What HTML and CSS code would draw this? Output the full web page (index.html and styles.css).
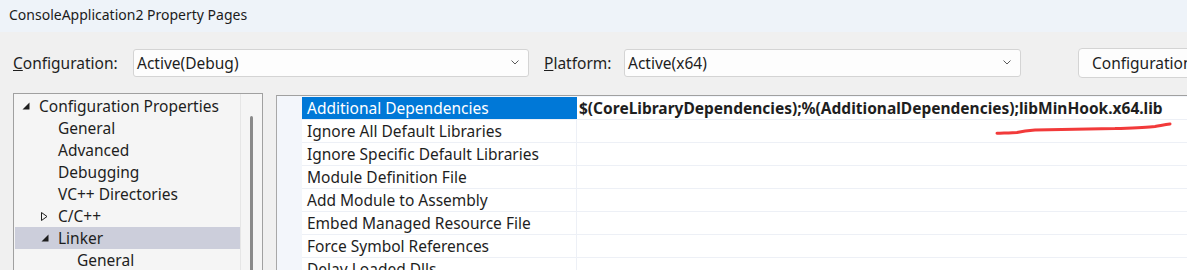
FILE: index.html
```html
<!DOCTYPE html>
<html lang="en">
<head>
    <meta charset="UTF-8">
    <title>ConsoleApplication2 Property Pages</title>
    <link rel="stylesheet" href="styles.css">
</head>
<body>
<div class="titlebar">ConsoleApplication2 Property Pages</div>

<div class="toolbar">
    <label class="field-label cfg-label"><u>C</u>onfiguration:</label>
    <div class="combo cfg-combo">
        <span>Active(Debug)</span>
        <svg class="chevron" width="8" height="5" viewBox="0 0 8 5"><path d="M0.5 0.5 L4 4 L7.5 0.5" fill="none" stroke="#5a5a5a" stroke-width="1"/></svg>
    </div>
    <label class="field-label plat-label"><u>P</u>latform:</label>
    <div class="combo plat-combo">
        <span>Active(x64)</span>
        <svg class="chevron" width="8" height="5" viewBox="0 0 8 5"><path d="M0.5 0.5 L4 4 L7.5 0.5" fill="none" stroke="#5a5a5a" stroke-width="1"/></svg>
    </div>
    <button class="cfg-btn">Configuration Manager...</button>
</div>

<div class="main">
    <div class="tree">
        <ul class="tree-list">
            <li class="node lvl0"><span class="tw"><svg width="8" height="8" viewBox="0 0 8 8"><polygon points="7.5,0.5 7.5,7.5 0.5,7.5" fill="#1e1e1e"/></svg></span>Configuration Properties</li>
            <li class="node lvl1"><span class="tw"></span>General</li>
            <li class="node lvl1"><span class="tw"></span>Advanced</li>
            <li class="node lvl1"><span class="tw"></span>Debugging</li>
            <li class="node lvl1"><span class="tw"></span>VC++ Directories</li>
            <li class="node lvl1"><span class="tw"><svg width="7" height="9" viewBox="0 0 7 9"><polygon points="0.5,0.5 6,4.5 0.5,8.5" fill="none" stroke="#1e1e1e" stroke-width="1"/></svg></span>C/C++</li>
            <li class="node lvl1 active"><span class="tw"><svg width="8" height="8" viewBox="0 0 8 8"><polygon points="7.5,0.5 7.5,7.5 0.5,7.5" fill="#1e1e1e"/></svg></span>Linker</li>
            <li class="node lvl2"><span class="tw"></span>General</li>
        </ul>
        <div class="tree-scroll"><div class="thumb"></div></div>
    </div>

    <div class="grid">
        <div class="row selected">
            <div class="name">Additional Dependencies</div>
            <div class="value">$(CoreLibraryDependencies);%(AdditionalDependencies);libMinHook.x64.lib</div>
        </div>
        <div class="row"><div class="name">Ignore All Default Libraries</div><div class="value"></div></div>
        <div class="row"><div class="name">Ignore Specific Default Libraries</div><div class="value"></div></div>
        <div class="row"><div class="name">Module Definition File</div><div class="value"></div></div>
        <div class="row"><div class="name">Add Module to Assembly</div><div class="value"></div></div>
        <div class="row"><div class="name">Embed Managed Resource File</div><div class="value"></div></div>
        <div class="row"><div class="name">Force Symbol References</div><div class="value"></div></div>
        <div class="row"><div class="name">Delay Loaded Dlls</div><div class="value"></div></div>
    </div>
</div>

<!-- hand-drawn red mark over the value -->
<svg class="squiggle" width="190" height="20" viewBox="0 0 190 20">
    <path d="M2 15.3 C10 15 18 14.8 22 14.5 C28 13.2 34 12.5 40 12 C70 11.5 100 11 120 10.6 C135 10 150 9.5 160 8.5 C166 7.5 170 6.5 175 6" fill="none" stroke="#f23a3a" stroke-width="3" stroke-linecap="round"/>
</svg>
</body>
</html>
```

FILE: styles.css
```css
body {
    margin: 0;
    width: 1187px;
    height: 270px;
    overflow: hidden;
    background: #f0f0f0;
    font-family: "Noto Sans", "Open Sans", sans-serif;
    font-size: 15.5px;
    color: #1e1e1e;
    position: relative;
}

.titlebar {
    height: 32px;
    line-height: 30px;
    padding-left: 9px;
    font-size: 14px;
    background: #eef3f9;
    color: #1b1b1b;
}

.toolbar {
    display: flex;
    align-items: center;
    height: 61px;
    padding-left: 13px;
}

.field-label {
    flex-shrink: 0;
}

.cfg-label {
    width: 120px;
}

.plat-label {
    width: 80px;
    margin-left: 15px;
}

.combo {
    display: flex;
    align-items: center;
    justify-content: space-between;
    box-sizing: border-box;
    height: 28px;
    padding: 0 9px 0 3px;
    background: #fdfdfd;
    border: 1px solid #d4d4d4;
    border-radius: 3px;
    flex-shrink: 0;
}

.cfg-combo {
    width: 396px;
}

.plat-combo {
    width: 397px;
}

.cfg-btn {
    flex-shrink: 0;
    margin-left: 57px;
    height: 30px;
    padding: 0 13px;
    background: #fdfdfd;
    border: 1px solid #d4d4d4;
    border-radius: 4px;
    font-family: inherit;
    font-size: inherit;
    color: #1e1e1e;
    white-space: nowrap;
}

.main {
    display: flex;
    align-items: flex-start;
    gap: 13px;
    padding-left: 13px;
}

.tree {
    display: flex;
    box-sizing: border-box;
    width: 250px;
    height: 200px;
    border: 1px solid #a0a0a0;
    background: #f5f5f5;
}

.tree-list {
    list-style: none;
    margin: 0;
    padding: 1px 0 0 1px;
    width: 225px;
}

.node {
    display: flex;
    align-items: center;
    height: 22px;
    white-space: nowrap;
}

.node.active {
    background: #cccedb;
}

.tw {
    display: flex;
    align-items: center;
    justify-content: flex-start;
    width: 17px;
}

.lvl0 {
    padding-left: 7px;
}

.lvl1 {
    padding-left: 26px;
}

.lvl2 {
    padding-left: 45px;
}

.tree-scroll {
    width: 21px;
    border-left: 1px solid #e6e6e6;
    display: flex;
    justify-content: center;
    padding-top: 22px;
}

.thumb {
    width: 3px;
    height: 200px;
    border-radius: 2px;
    background: #8a8a8a;
}

.grid {
    flex: 1;
    margin-top: 2px;
    height: 200px;
    padding: 1px 0 0 25px;
    border-top: 1px solid #a0a0a0;
    border-left: 1px solid #a8a8a8;
    background: #f3f6fb;
}

.row {
    display: flex;
    height: 22px;
    line-height: 22px;
    border-bottom: 1px solid #edf0f6;
    background: #fff;
    white-space: nowrap;
}

.name {
    box-sizing: border-box;
    width: 275px;
    padding-left: 5px;
    border-right: 1px solid #edf0f6;
}

.value {
    flex: 1;
    padding-left: 2px;
    font-weight: bold;
}

.row.selected .name {
    background: #0078d7;
    color: #fff;
    border-right-color: #0078d7;
}

.squiggle {
    position: absolute;
    left: 995px;
    top: 118px;
}
```
